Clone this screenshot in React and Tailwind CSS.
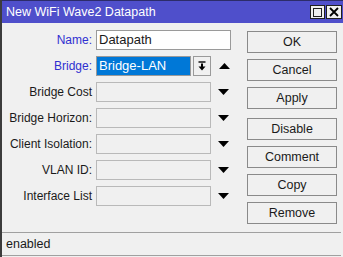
import React from "react";

const font = { fontFamily: '"Liberation Sans", Arial, sans-serif' };

function Down() {
  return (
    <svg width="11" height="6" viewBox="0 0 11 6" className="shrink-0">
      <polygon points="0,0 11,0 5.5,6" fill="#000" />
    </svg>
  );
}

function Up() {
  return (
    <svg width="11" height="6" viewBox="0 0 11 6" className="shrink-0">
      <polygon points="0,6 11,6 5.5,0" fill="#000" />
    </svg>
  );
}

const rows = [
  { label: "Bridge Cost" },
  { label: "Bridge Horizon:" },
  { label: "Client Isolation:" },
  { label: "VLAN ID:" },
  { label: "Interface List" },
];

const buttons = ["OK", "Cancel", "Apply", "Disable", "Comment", "Copy", "Remove"];

export default function App() {
  return (
    <div
      className="w-[343px] h-[257px] bg-[#f0f0f0] border-l-2 border-[#3c3c3c] flex flex-col overflow-hidden text-[12px] text-[#1a1a1a]"
      style={font}
    >
      {/* title bar */}
      <div className="h-[23px] bg-[#4f4fcb] border-t border-[#2c2c6a] flex items-center pl-[4px] pr-[1px]">
        <span className="text-white text-[12.5px] flex-1">New WiFi Wave2 Datapath</span>
        <div className="flex gap-[1px]">
          <div className="w-[15px] h-[14px] bg-[#f0f0f0] border border-[#202020] flex items-center justify-center">
            <div className="w-[9px] h-[9px] border border-[#202020]" />
          </div>
          <div className="w-[16px] h-[14px] bg-[#f0f0f0] border border-[#202020] flex items-center justify-center">
            <svg width="10" height="10" viewBox="0 0 10 10">
              <path d="M1 1 L9 9 M9 1 L1 9" stroke="#000" strokeWidth="1.8" />
            </svg>
          </div>
        </div>
      </div>

      <div className="flex flex-1">
        {/* form */}
        <div className="flex flex-col gap-[6px] pt-[7px] w-[245px]">
          <div className="flex items-center h-[20px]">
            <span className="w-[91px] text-right pr-[1px] text-[#2f2fd0]">Name:</span>
            <div className="ml-[3px] w-[135px] h-[20px] bg-white border border-[#9a9a9a] flex items-center pl-[2px] text-[13px]">
              Datapath
            </div>
          </div>
          <div className="flex items-center h-[20px]">
            <span className="w-[91px] text-right pr-[1px] text-[#2f2fd0]">Bridge:</span>
            <div className="ml-[3px] w-[95px] h-[20px] bg-[#0078d7] border border-[#9a9a9a] flex items-center pl-[2px] text-white text-[13px]">
              Bridge-LAN
            </div>
            <div className="ml-[2px] w-[18px] h-[20px] border border-[#9a9a9a] bg-[#f0f0f0] flex items-center justify-center">
              <svg width="8" height="10" viewBox="0 0 8 10">
                <path d="M0.5 1 H7.5" stroke="#000" strokeWidth="1.4" />
                <path d="M4 2.5 V6" stroke="#000" strokeWidth="2" />
                <polygon points="0.5,5.5 7.5,5.5 4,9.5" fill="#000" />
              </svg>
            </div>
            <div className="ml-[8px]">
              <Up />
            </div>
          </div>
          {rows.map((r) => (
            <div key={r.label} className="flex items-center h-[20px]">
              <span className="w-[91px] text-right pr-[1px]">{r.label}</span>
              <div className="ml-[3px] w-[115px] h-[20px] border border-[#b9b9b9] bg-[#f0f0f0]" />
              <div className="ml-[7px]">
                <Down />
              </div>
            </div>
          ))}
        </div>

        {/* buttons */}
        <div className="flex flex-col pt-[8px]">
          {buttons.map((b, i) => (
            <div
              key={b}
              className={
                "w-[90px] h-[22px] border border-[#8a8a8a] bg-[#f0f0f0] flex items-center justify-center text-[12.5px] " +
                (i === 0 ? "" : i === 3 ? "mt-[9px]" : "mt-[6px]")
              }
            >
              {b}
            </div>
          ))}
        </div>
      </div>

      {/* status bar */}
      <div className="h-[24px] border-t border-b border-[#a0a0a0] flex items-center pl-[4px] mb-[1px] mr-[2px] text-[12.5px]">
        enabled
      </div>
    </div>
  );
}
